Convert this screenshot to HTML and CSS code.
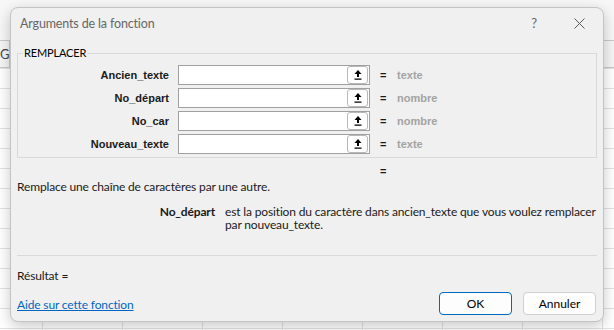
FILE: index.html
```html
<!DOCTYPE html>
<html lang="fr">

<head>
    <meta charset="UTF-8" />
    <meta name="viewport" content="width=device-width, initial-scale=1.0" />
    <title>Arguments de la fonction</title>
    <link rel="stylesheet" href="styles.css">
</head>

<body>
    <div class="sheet">
        <div class="ribbon"></div>
        <div class="colhead">
            <div class="col first">G</div>
            <div class="col"></div>
        </div>
        <div class="grid"></div>
    </div>

    <div class="dialog">
        <div class="titlebar">
            <span class="title">Arguments de la fonction</span>
            <span class="help">?</span>
            <svg class="close" width="11" height="11" viewBox="0 0 11 11">
                <path d="M0.5 0.5 L10.5 10.5 M10.5 0.5 L0.5 10.5" stroke="#5a5a5a" stroke-width="1" fill="none" />
            </svg>
        </div>

        <fieldset class="group">
            <legend>REMPLACER</legend>
            <div class="args">
                <div class="arg-label">Ancien_texte</div>
                <div class="field"><span class="pick"><svg width="8" height="10" viewBox="0 0 8 10"><path d="M4 0 L7.5 4 H5 V7 H3 V4 H0.5 Z M0.5 8.5 H7.5 V9.8 H0.5 Z" fill="#000" /></svg></span></div>
                <div class="eq">=</div>
                <div class="val">texte</div>

                <div class="arg-label">No_départ</div>
                <div class="field"><span class="pick"><svg width="8" height="10" viewBox="0 0 8 10"><path d="M4 0 L7.5 4 H5 V7 H3 V4 H0.5 Z M0.5 8.5 H7.5 V9.8 H0.5 Z" fill="#000" /></svg></span></div>
                <div class="eq">=</div>
                <div class="val">nombre</div>

                <div class="arg-label">No_car</div>
                <div class="field"><span class="pick"><svg width="8" height="10" viewBox="0 0 8 10"><path d="M4 0 L7.5 4 H5 V7 H3 V4 H0.5 Z M0.5 8.5 H7.5 V9.8 H0.5 Z" fill="#000" /></svg></span></div>
                <div class="eq">=</div>
                <div class="val">nombre</div>

                <div class="arg-label">Nouveau_texte</div>
                <div class="field"><span class="pick"><svg width="8" height="10" viewBox="0 0 8 10"><path d="M4 0 L7.5 4 H5 V7 H3 V4 H0.5 Z M0.5 8.5 H7.5 V9.8 H0.5 Z" fill="#000" /></svg></span></div>
                <div class="eq">=</div>
                <div class="val">texte</div>
            </div>
        </fieldset>

        <div class="total-eq">=</div>
        <p class="desc">Remplace une chaîne de caractères par une autre.</p>

        <div class="argdesc">
            <div class="argdesc-name">No_départ</div>
            <div class="argdesc-text">est la position du caractère dans ancien_texte que vous voulez remplacer par nouveau_texte.</div>
        </div>

        <hr class="sep">

        <div class="result">Résultat =</div>

        <div class="footer">
            <a href="#" class="help-link">Aide sur cette fonction</a>
            <div class="buttons">
                <button class="btn primary">OK</button>
                <button class="btn">Annuler</button>
            </div>
        </div>
    </div>
</body>

</html>
```

FILE: styles.css
```css
:root {
    --dlg-bg: #f0f0f0;
    --text: #1a1a1a;
    --muted: #a3a3a3;
    --line: #d9d9d9;
    --grid: #e2e2e2;
    --accent: #0067c0;
}

body {
    margin: 0;
    width: 614px;
    height: 330px;
    overflow: hidden;
    position: relative;
    font-family: Lato, "Liberation Sans", sans-serif;
    font-size: 12px;
    letter-spacing: -0.15px;
    color: var(--text);
    background: #fff;
}

/* spreadsheet behind the dialog */
.sheet {
    position: absolute;
    inset: 0;
    display: flex;
    flex-direction: column;
}

.ribbon {
    height: 40px;
    background: #f7f7f7;
    border-bottom: 1px solid #c9c9c9;
}

.colhead {
    height: 26px;
    display: flex;
    background: #f5f5f5;
    border-bottom: 1px solid #c9c9c9;
}

.col {
    flex: 1;
    font-size: 13px;
    color: #444;
    line-height: 26px;
}

.col.first {
    flex: 0 0 9px;
    text-align: right;
    border-right: 1px solid #c9c9c9;
}

.grid {
    flex: 1;
    background-color: #fff;
    background-image:
        linear-gradient(to bottom, var(--grid) 1px, transparent 1px),
        linear-gradient(to right, var(--grid) 1px, transparent 1px);
    background-size: 100% 20px, 80px 100%;
    background-position: 0 20px, 42px 0;
}

/* dialog */
.dialog {
    position: absolute;
    left: 10px;
    top: 7px;
    width: 594px;
    height: 315px;
    box-sizing: border-box;
    padding: 0 6px;
    background: var(--dlg-bg);
    border: 1px solid #c4c4c4;
    border-radius: 8px;
    box-shadow: 0 4px 14px rgba(0, 0, 0, 0.22);
}

.titlebar {
    height: 30px;
    display: flex;
    align-items: center;
    padding-left: 3px;
}

.title {
    flex: 1;
    font-size: 12.5px;
    color: #666;
}

.help {
    font-size: 13px;
    color: #666;
    margin-right: 37px;
}

.close {
    margin-right: 12px;
}

.group {
    margin: 8px 0 0;
    padding: 5px 0 3px;
    border: 1px solid var(--line);
    min-inline-size: auto;
}

.group legend {
    margin-left: 5px;
    padding: 0 1px;
    font-size: 11px;
    line-height: 14px;
    color: #000;
}

.args {
    display: grid;
    grid-template-columns: 151px 201px 16px 1fr;
    grid-auto-rows: 20px;
    row-gap: 3px;
    align-items: center;
    font-family: "Liberation Sans", Arial, sans-serif;
    font-size: 11px;
    font-weight: bold;
    letter-spacing: 0;
}

.arg-label {
    text-align: right;
}

.field {
    height: 20px;
    box-sizing: border-box;
    margin-left: 9px;
    background: #fff;
    border: 1px solid #a0a0a0;
    display: flex;
    justify-content: flex-end;
    align-items: center;
}

.pick {
    width: 21px;
    height: 18px;
    box-sizing: border-box;
    margin-right: 1px;
    border: 1px solid #b8b8b8;
    border-radius: 3px;
    background: #fff;
    display: flex;
    align-items: center;
    justify-content: center;
}

.eq {
    padding-left: 10px;
}

.val {
    padding-left: 11px;
    color: var(--muted);
}

.total-eq {
    margin: 6px 0 0 363px;
    font-family: "Liberation Sans", Arial, sans-serif;
    font-weight: bold;
    font-size: 11px;
    line-height: 14px;
}

.desc {
    margin: 2px 0 0;
    line-height: 14px;
}

.argdesc {
    display: grid;
    grid-template-columns: 198px 1fr;
    column-gap: 10px;
    margin-top: 11px;
    margin-right: -4px;
    line-height: 13px;
}

.argdesc-name {
    text-align: right;
    font-weight: bold;
}

.sep {
    margin: 24px 0 0;
    border: none;
    border-top: 1px solid var(--line);
}

.result {
    margin-top: 13px;
    line-height: 14px;
}

.footer {
    margin-top: 9px;
    display: flex;
    align-items: center;
    justify-content: space-between;
}

.help-link {
    color: var(--accent);
    text-decoration: underline;
    margin-top: 2px;
}

.buttons {
    display: flex;
    gap: 11px;
    margin-right: 1px;
}

.btn {
    width: 73px;
    height: 23px;
    font-family: inherit;
    font-size: 12px;
    color: #000;
    background: #fdfdfd;
    border: 1px solid #d0d0d0;
    border-radius: 4px;
}

.btn.primary {
    border-color: var(--accent);
}
```
